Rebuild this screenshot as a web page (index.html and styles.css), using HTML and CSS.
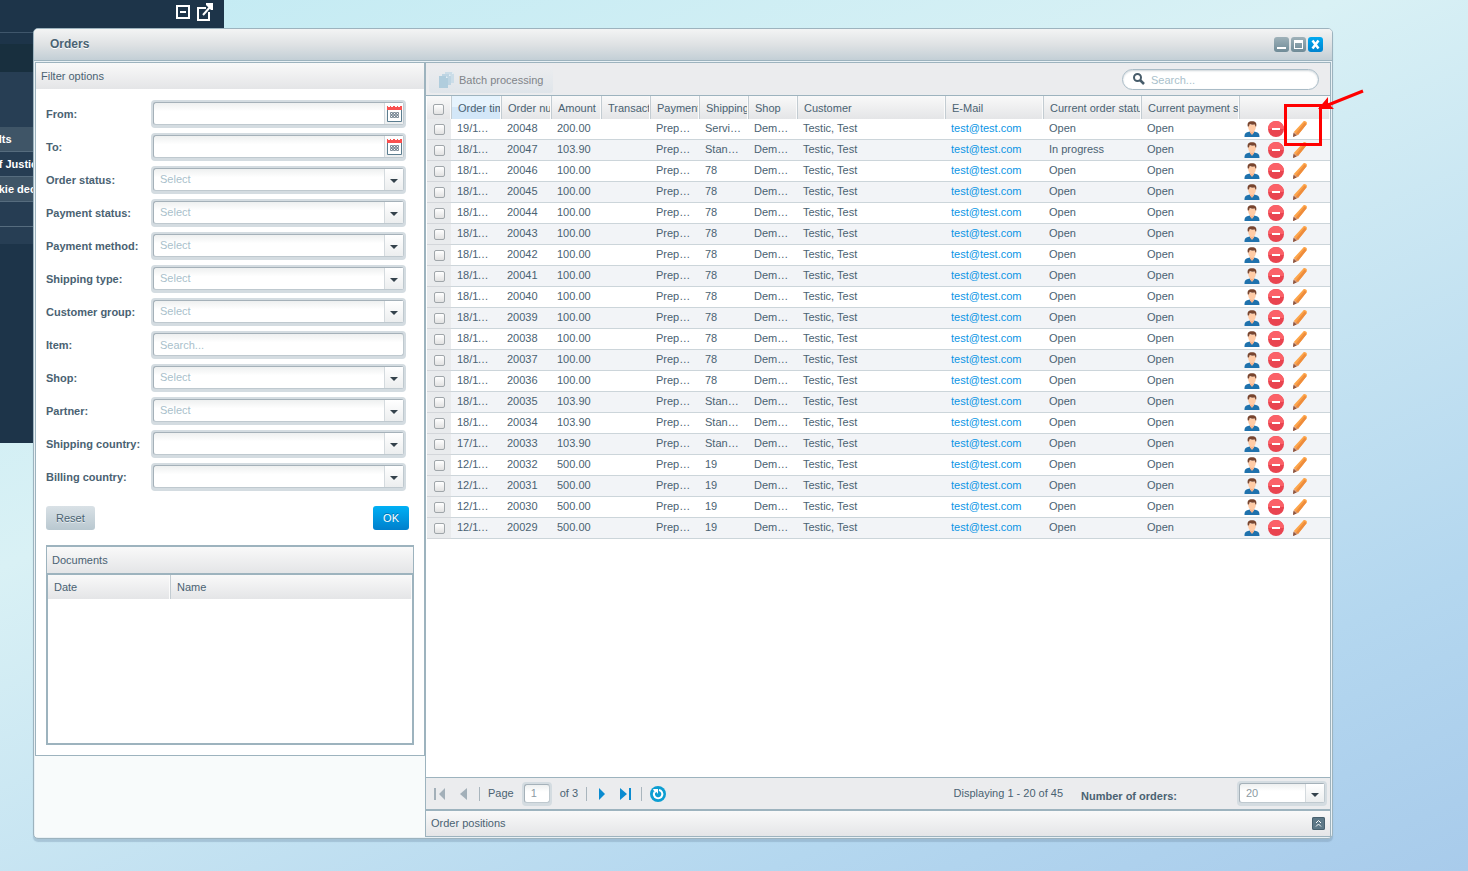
FILE: index.html
```html
<!DOCTYPE html>
<html lang="en">
<head>
<meta charset="utf-8">
<title>Orders</title>
<link rel="stylesheet" href="styles.css">
</head>
<body>
<svg class="sprite" aria-hidden="true">
  <symbol id="i-calendar" viewBox="0 0 16 16">
    <path fill="#fff" stroke="#5b7d8f" d="M1.500 3.500h14v12h-14z"/>
    <path fill="#f9504f" d="M1 0h1v1h2V0h1v1h2V0h2v1h2V0h1v1h2V0h2v4H1z"/>
    <g fill="none" stroke="#7c8b97"><path d="M4.500 6.500h2v2h-2zM7.500 6.500h2v2h-2zM10.500 6.500h2v2h-2zM4.500 9.500h2v2h-2zM7.500 9.500h2v2h-2zM10.500 9.500h2v2h-2z"/></g>
  </symbol>
  <symbol id="i-user" viewBox="0 0 16 16">
    <path fill="#1f72ad" d="M.5 16c0-3.500 1-4.500 5-5.500l2.500 2 2.500-2c4 1 5 2 5 5.500z"/>
    <path fill="#f6b48e" d="M6 9h4v2.500L8 14l-2-2.500z"/>
    <path fill="#ffcba6" d="M4.500 3.500h7l.3 3C11.500 9 10 11 8 11S4.500 9 4.200 6.500z"/>
    <path fill="#78452f" d="M3.800 5.500C3 1.800 4.500.2 8 .2s5 1.600 4.200 5.300h-.8l-.6-2c-1.800.3-3.800.1-5-.4l-1 2.400z"/>
  </symbol>
  <symbol id="i-minus" viewBox="0 0 16 16">
    <circle cx="8" cy="8" r="8" fill="#e94450"/><path fill="#fb6168" d="M0 8a8 8 0 0 1 16 0z"/>
    <rect x="4" y="7" width="8" height="2" fill="#fff"/>
  </symbol>
  <symbol id="i-pencil" viewBox="0 0 16 16">
    <path fill="#fda54a" d="M10.500 1.500Q12-.8 14 .6q1.500 1 .6 2.600L6 14 1.800 11z"/>
    <path fill="#ee8c3c" d="M14.600 3.200 6 14l-2.100-1.500L12.600 1.500z"/>
    <path fill="#d59169" d="M1.800 11 6 14l-5 2z"/><path fill="#8a5645" d="m1.500 12 3 2.400L1 16z"/>
  </symbol>
  <symbol id="i-double-up" viewBox="0 0 13 13">
    <path fill="none" stroke="#fff" d="M4 6 6.500 3.500 9 6M4 9.500 6.500 7 9 9.500"/>
  </symbol>
</svg>

<aside class="sidebar">
  <div class="sidebar-tools">
    <button type="button" aria-label="Collapse"><svg width="14" height="14" viewBox="0 0 14 14"><path fill="none" stroke="#fff" stroke-width="2" d="M1 1h12v12H1zM4 7h6"/></svg></button>
    <button type="button" aria-label="Open in new window"><svg width="18" height="18" viewBox="0 0 18 18"><path fill="none" stroke="#fff" stroke-width="2" d="M10 5H2v12h11V9M7 12l8-9"/><path fill="#fff" d="M10 0h7v7h-2L10 2z"/></svg></button>
  </div>
  <div class="sidebar-gap"></div>
  <div class="sidebar-band"></div>
  <div class="sidebar-space"></div>
  <div class="sidebar-item raised">ults</div>
  <div class="sidebar-item">of Justice</div>
  <div class="sidebar-item raised">okie decision</div>
  <div class="sidebar-item"></div>
  <div class="sidebar-end"></div>
</aside>

<main class="window">
  <header class="titlebar">
    <h1>Orders</h1>
    <button type="button" class="tool" aria-label="Minimize"><svg viewBox="0 0 15 15"><path fill="#fff" d="M3 10h9v2H3z"/></svg></button>
    <button type="button" class="tool" aria-label="Maximize"><svg viewBox="0 0 15 15"><path fill="#fff" fill-rule="evenodd" d="M3 3h9v9H3zM4 6v5h7V6z"/></svg></button>
    <button type="button" class="tool close" aria-label="Close"><svg viewBox="0 0 15 15"><path stroke="#fff" stroke-width="2.500" d="m4.500 3.500 6 8m0-8-6 8"/></svg></button>
  </header>

  <div class="content">
    <section class="side">
      <div class="filter">
        <h2 class="bar">Filter options</h2>
        <form class="filter-form">
          <div class="fields">
            <label for="from">From:</label>
            <div class="field"><input id="from" type="text"><button type="button" class="trigger" aria-label="Pick start date"><svg width="16" height="16"><use href="#i-calendar"/></svg></button></div>
            <label for="to">To:</label>
            <div class="field"><input id="to" type="text"><button type="button" class="trigger" aria-label="Pick end date"><svg width="16" height="16"><use href="#i-calendar"/></svg></button></div>
            <label for="ostatus">Order status:</label>
            <div class="field"><select id="ostatus"><option>Select</option></select><span class="trigger arrow"></span></div>
            <label for="pstatus">Payment status:</label>
            <div class="field"><select id="pstatus"><option>Select</option></select><span class="trigger arrow"></span></div>
            <label for="pmethod">Payment method:</label>
            <div class="field"><select id="pmethod"><option>Select</option></select><span class="trigger arrow"></span></div>
            <label for="stype">Shipping type:</label>
            <div class="field"><select id="stype"><option>Select</option></select><span class="trigger arrow"></span></div>
            <label for="group">Customer group:</label>
            <div class="field"><select id="group"><option>Select</option></select><span class="trigger arrow"></span></div>
            <label for="item">Item:</label>
            <div class="field"><input id="item" type="text" placeholder="Search..."></div>
            <label for="shop">Shop:</label>
            <div class="field"><select id="shop"><option>Select</option></select><span class="trigger arrow"></span></div>
            <label for="partner">Partner:</label>
            <div class="field"><select id="partner"><option>Select</option></select><span class="trigger arrow"></span></div>
            <label for="scountry">Shipping country:</label>
            <div class="field"><select id="scountry"><option></option></select><span class="trigger arrow"></span></div>
            <label for="bcountry">Billing country:</label>
            <div class="field"><select id="bcountry"><option></option></select><span class="trigger arrow"></span></div>
          </div>
          <div class="form-buttons">
            <button type="reset" class="btn">Reset</button>
            <button type="button" class="btn primary">OK</button>
          </div>
          <div class="documents">
            <h2 class="bar">Documents</h2>
            <div class="documents-body">
              <table class="grid">
                <colgroup><col class="c-date"><col></colgroup>
                <thead><tr><th>Date</th><th>Name</th></tr></thead>
              </table>
            </div>
          </div>
        </form>
      </div>
    </section>

    <section class="orders">
      <div class="toolbar">
        <button type="button" class="batch" disabled>
          <svg width="16" height="16" viewBox="0 0 16 16"><path fill="#cbdde8" d="M6 0h7l2 2v9H6z"/><path fill="#bed5e3" d="M3 2h7l2 2v9H3z"/><path fill="#b0cddd" d="M0 4h7l2 2v10H0z"/><path fill="#e4eef4" d="M7 4v2h2zM10 2v2h2zM13 0v2h2z"/></svg>
          Batch processing
        </button>
        <label class="search">
          <svg width="12" height="12" viewBox="0 0 12 12"><circle cx="4.500" cy="4.500" r="3.500" fill="none" stroke="#475c6a" stroke-width="2"/><path stroke="#475c6a" stroke-width="2.500" d="m7 7 4 4"/></svg>
          <input type="text" placeholder="Search..." aria-label="Search orders">
        </label>
      </div>

      <div class="table-area">
        <table class="grid orders-grid">
          <colgroup><col class="c-check"><col class="c-m"><col class="c-m"><col class="c-m"><col class="c-s"><col class="c-s"><col class="c-s"><col class="c-s"><col><col class="c-l"><col class="c-l"><col class="c-l"><col class="c-act"></colgroup>
          <thead><tr>
            <th class="check"><input type="checkbox" aria-label="Select all orders"></th>
            <th class="sorted">Order time</th><th>Order number</th><th>Amount</th><th>Transaction</th><th>Payment method</th><th>Shipping type</th><th>Shop</th><th>Customer</th><th>E-Mail</th><th>Current order status</th><th>Current payment status</th><th></th>
          </tr></thead>
          <tbody id="order-rows"></tbody>
        </table>
      </div>

      <footer class="paging">
        <button type="button" class="nav" aria-label="First page" disabled><svg width="12" height="14" viewBox="0 0 12 14"><path fill="#a3b0b9" d="M1 1h2v12H1zM12 1v12L6 7z"/></svg></button>
        <button type="button" class="nav" aria-label="Previous page" disabled><svg width="12" height="14" viewBox="0 0 12 14"><path fill="#a3b0b9" d="M11 1v12L4 7z"/></svg></button>
        <span class="sep"></span>
        <label for="page">Page</label>
        <div class="field page-field"><input id="page" type="text" value="1"></div>
        <span>of 3</span>
        <span class="sep"></span>
        <button type="button" class="nav" aria-label="Next page"><svg width="12" height="14" viewBox="0 0 12 14"><path fill="#0a8bd0" d="M4 1v12l6-6z"/></svg></button>
        <button type="button" class="nav" aria-label="Last page"><svg width="14" height="14" viewBox="0 0 14 14"><path fill="#0a8bd0" d="M2 1v12l7-6zM11 1h2v12h-2z"/></svg></button>
        <span class="sep"></span>
        <button type="button" class="nav" aria-label="Refresh"><svg width="16" height="16" viewBox="0 0 16 16"><circle cx="8" cy="8" r="8" fill="#0c9ed2"/><path fill="none" stroke="#fff" stroke-width="2" d="M9 4a4.200 4.200 0 1 1-4.500 2"/><path fill="#fff" d="M3 3h5v5L6.500 6 5 7z"/></svg></button>
        <span class="displaying">Displaying 1 - 20 of 45</span>
        <label for="count" class="count-label">Number of orders:</label>
        <div class="field count-field"><select id="count"><option>20</option></select><span class="trigger arrow"></span></div>
      </footer>

      <div class="bar positions">
        <h2>Order positions</h2>
        <button type="button" class="expand" aria-label="Expand order positions"><svg width="13" height="13"><use href="#i-double-up"/></svg></button>
      </div>
    </section>
  </div>
</main>

<div class="callout"></div>
<svg class="callout-arrow" width="48" height="26" viewBox="0 0 48 26" aria-hidden="true"><path stroke="#f00" stroke-width="3" d="M46 3 11 17"/><path fill="#f00" d="M1 21 11 9v6l6 6z"/></svg>

<script src="app.js"></script>
</body>
</html>
```

FILE: styles.css
```css
* { box-sizing: border-box; }

body {
  margin: 0;
  min-height: 100vh;
  overflow: hidden;
  background: linear-gradient(157deg, #c1eaf3 0%, #d9f1f5 38%, #b4d7ef 80%, #a8cbeb 100%);
  color: #4a6272;
  font: 11px/13px "Liberation Sans", Arial, sans-serif;
}

h1, h2 { margin: 0; font-size: 11px; font-weight: normal; }
button, input, select { font: inherit; color: inherit; }
button { padding: 0; border: 0; background: none; }
svg { display: block; }
.sprite { position: absolute; width: 0; height: 0; }

/* Application menu behind the window */
.sidebar {
  position: absolute;
  top: 0;
  left: 0;
  width: 224px;
  height: 443px;
  overflow: hidden;
  background: #1d3449;
  color: #fff;
  font-weight: bold;
}
.sidebar-tools { display: flex; justify-content: flex-end; align-items: center; gap: 6px; height: 33px; padding: 0 10px 8px 0; border-bottom: 1px solid #3f566b; }
.sidebar-gap { height: 11px; }
.sidebar-band { height: 28px; background: #182f3e; }
.sidebar-space { height: 55px; background: #273e54; }
.sidebar-item { height: 25px; padding-top: 6px; border-bottom: 1px solid #566c7e; background: #263d53; text-indent: -8px; white-space: nowrap; }
.sidebar-item.raised { background: #3f5567; }
.sidebar-end { height: 17px; background: #273e54; }

/* Window */
.window {
  position: absolute;
  inset: 28px 135px 32px 33px;
  display: flex;
  flex-direction: column;
  border: 1px solid #9db3be;
  border-radius: 5px;
  background: #e9f1f5;
  box-shadow: 0 3px 1px rgba(120, 150, 175, .4);
}
.titlebar {
  display: flex;
  align-items: center;
  gap: 2px;
  flex: none;
  height: 32px;
  padding: 0 9px 0 16px;
  border-bottom: 1px solid #9db3be;
  border-radius: 4px 4px 0 0;
  background: linear-gradient(#f3f4f4, #dfe2e4 50%, #c3cfd6);
}
.titlebar h1 { flex: 1; font-size: 12px; font-weight: bold; text-shadow: 0 1px 0 #fff; }
.tool { width: 15px; height: 15px; border-radius: 3px; background: linear-gradient(#9eb1b9, #6f8b97); }
.tool.close { background: linear-gradient(#00a9f0, #0083cf); }
.content { display: flex; flex: 1; min-height: 0; padding: 1px; }

/* Filter panel */
.side { flex: none; width: 390px; background: #f8fbfb; }
.filter { border: 1px solid #9db3be; background: #fff; }
.bar { display: flex; align-items: center; height: 26px; padding: 0 5px; background: linear-gradient(#f9f9f9, #e4e5e7); }
.filter-form { padding: 11px 10px 10px; }
.fields { display: grid; grid-template-columns: 105px 1fr; gap: 5px 0; align-items: center; padding-right: 8px; }
.fields label { font-weight: bold; }

.field {
  display: grid;
  grid-template-columns: 1fr 20px;
  height: 28px;
  border: 2px solid #d4dce1;
  border-bottom-width: 3px;
  border-radius: 4px;
  background: #d4dce1;
}
.field input, .field select {
  grid-area: 1 / 1 / 2 / 3;
  width: 100%;
  min-width: 0;
  height: 100%;
  margin: 0;
  padding: 0 6px;
  border: 1px solid #a5b1b9;
  border-right-color: #bfc9cf;
  border-bottom-color: #bfc9cf;
  border-radius: 3px;
  outline: 0;
  background: linear-gradient(#eef0f0, #fff 40%);
  color: #8c9aa3;
  appearance: none;
}
.fields select { color: #a9bfcb; }
.field ::placeholder, .search ::placeholder { color: #a9bfcb; opacity: 1; }
.trigger {
  grid-area: 1 / 2;
  display: flex;
  align-items: center;
  justify-content: center;
  margin: 1px 1px 1px 0;
  border-left: 1px solid #d4dade;
  background: linear-gradient(#fff, #eceeef);
}
.arrow { pointer-events: none; }
.arrow::after { content: ""; margin-top: 3px; border: 4px solid transparent; border-top-color: #34424c; border-bottom: 0; }

.form-buttons { display: flex; justify-content: space-between; padding: 15px 5px 15px 0; }
.btn { height: 24px; padding: 0 10px; border-radius: 3px; background: linear-gradient(#d9e1e6, #b9c8d0); text-shadow: 0 1px 0 #e8eef1; }
.btn.primary { background: linear-gradient(#00b0f5, #007fcc); color: #fff; text-shadow: 0 -1px 0 #0070b0; }

.documents { border: 1px solid #9db3be; border-top-width: 2px; }
.documents-body { height: 171px; border: 1px solid #9db3be; border-top-width: 2px; }

/* Tables */
.grid { width: 100%; border-spacing: 0; table-layout: fixed; }
.grid th {
  height: 23px;
  padding: 1px 0 0 6px;
  overflow: hidden;
  border-left: 1px solid #c3ccd2;
  border-right: 1px solid #fbfbfb;
  background: linear-gradient(#f9f9f9, #e4e5e7);
  font-weight: normal;
  text-align: left;
  white-space: nowrap;
}
.grid th:first-child { border-left: 0; }
.documents .grid th { height: 24px; }
.grid th.sorted { background: linear-gradient(#e6f3fd 50%, #d3e7f8 50%); }
.grid td {
  height: 21px;
  padding: 0 6px 2px;
  overflow: hidden;
  border-bottom: 1px solid #ccd5da;
  text-overflow: ellipsis;
  white-space: nowrap;
}
.grid td:nth-child(2) { padding-right: 10px; }
.grid tr:nth-child(even) td { background: #f2f4f7; }
.grid .check { padding: 0; text-align: center; }
.grid tr td.check { background: #e9ebed; border-bottom-color: #d3d6da; }
.grid a { color: #0b95e5; text-decoration: none; }
.check input {
  display: block;
  width: 11px;
  height: 11px;
  margin: 0 auto;
  border: 1px solid #a0a6aa;
  border-radius: 2px;
  background: linear-gradient(#fff, #e2e2e2);
  appearance: none;
}
.grid th.check { padding-top: 4px; }
.grid td.actions { padding: 0 5px; }
.row-actions { display: flex; gap: 8px; }
.c-date { width: 122px; }
.c-check { width: 24px; }
.c-m { width: 50px; }
.c-s { width: 49px; }
.c-l { width: 98px; }
.c-act { width: 91px; }

/* Orders panel */
.orders { display: flex; flex: 1; flex-direction: column; min-width: 0; border: 1px solid #9db3be; background: #fff; }
.toolbar { display: flex; align-items: center; justify-content: space-between; flex: none; height: 33px; padding: 0 11px 0 3px; border-bottom: 1px solid #9db3be; background: #ebecee; }
.batch { display: flex; align-items: center; gap: 4px; height: 27px; padding: 2px 10px 0; border-radius: 3px; background: linear-gradient(#ecedef, #dfe5ea); color: #808489; }
.search { display: flex; align-items: center; gap: 6px; width: 197px; height: 21px; padding: 0 10px; border: 1px solid #a9bbc6; border-radius: 11px; background: #fff; box-shadow: inset 0 1px 2px #cfd6da; }
.search input { flex: 1; min-width: 0; padding: 2px 0 0; border: 0; outline: 0; background: none; }
.table-area { flex: 1; min-height: 0; overflow: hidden; padding-left: 1px; }

.paging { display: flex; align-items: center; flex: none; height: 32px; padding: 0 3px 0 7px; border-top: 1px solid #9db3be; background: #ebecee; }
.nav { display: block; margin-right: 11px; }
.nav:has(svg[width="14"]) { margin-right: 9px; }
.sep { width: 1px; height: 14px; margin-right: 8px; background: #a9b5bd; }
.page-field { grid-template-columns: 1fr 0; width: 30px; height: 24px; margin: 0 8px; }
.paging > .page-field + span { margin-right: 8px; }
.displaying { margin-left: auto; }
.count-label { margin: 6px 60px 0 18px; font-weight: bold; }
.count-field { width: 90px; height: 25px; }

.positions { justify-content: space-between; flex: none; height: 27px; border-top: 2px solid #9db3be; }
.expand { border-radius: 2px; background: #5d7887; box-shadow: inset 0 0 0 1px #48606e; }

/* Annotation over the edit action */
.callout { position: absolute; top: 104px; right: 146px; width: 38px; height: 42px; border: 3px solid #f00; pointer-events: none; }
.callout-arrow { position: absolute; top: 88px; right: 103px; pointer-events: none; }
```

FILE: app.js
```js
const orders = [
  ["19/11/2012", 20048, "200.00", "Servicepaket", "Open"],
  ["18/11/2012", 20047, "103.90", "Standard", "In progress"],
  ["18/11/2012", 20046, "100.00", "78", "Open"],
  ["18/11/2012", 20045, "100.00", "78", "Open"],
  ["18/11/2012", 20044, "100.00", "78", "Open"],
  ["18/11/2012", 20043, "100.00", "78", "Open"],
  ["18/11/2012", 20042, "100.00", "78", "Open"],
  ["18/11/2012", 20041, "100.00", "78", "Open"],
  ["18/11/2012", 20040, "100.00", "78", "Open"],
  ["18/11/2012", 20039, "100.00", "78", "Open"],
  ["18/11/2012", 20038, "100.00", "78", "Open"],
  ["18/11/2012", 20037, "100.00", "78", "Open"],
  ["18/11/2012", 20036, "100.00", "78", "Open"],
  ["18/11/2012", 20035, "103.90", "Standard", "Open"],
  ["18/11/2012", 20034, "103.90", "Standard", "Open"],
  ["17/11/2012", 20033, "103.90", "Standard", "Open"],
  ["12/11/2012", 20032, "500.00", "19", "Open"],
  ["12/11/2012", 20031, "500.00", "19", "Open"],
  ["12/11/2012", 20030, "500.00", "19", "Open"],
  ["12/11/2012", 20029, "500.00", "19", "Open"]
];

const action = (icon, label) =>
  `<button type="button" aria-label="${label}"><svg width="16" height="16"><use href="#${icon}"/></svg></button>`;

document.getElementById("order-rows").innerHTML = orders.map(([date, number, amount, shipping, status]) => `
  <tr>
    <td class="check"><input type="checkbox" aria-label="Select order ${number}"></td>
    <td>${date}</td><td>${number}</td><td>${amount}</td><td></td>
    <td>Prepayment</td><td>${shipping}</td><td>Demoshop</td><td>Testic, Test</td>
    <td><a href="#">test@test.com</a></td><td>${status}</td><td>Open</td>
    <td class="actions"><div class="row-actions">
      ${action("i-user", "Open customer")}${action("i-minus", "Delete order")}${action("i-pencil", "Edit order")}
    </div></td>
  </tr>`).join("");
```
